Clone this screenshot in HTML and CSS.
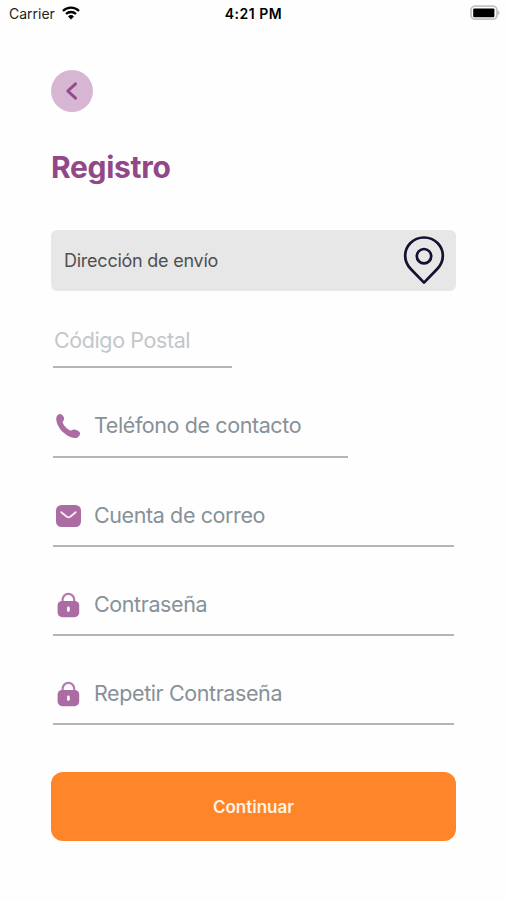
FILE: index.html
```html
<!DOCTYPE html>
<html lang="es">
<head>
  <meta charset="UTF-8" />
  <meta name="viewport" content="width=device-width, initial-scale=1.0"/>
  <title>Registro</title>
  <link rel="stylesheet" href="styles.css">
</head>
<body>
  <header class="status-bar">
    <div class="carrier">
      <span>Carrier</span>
      <svg class="wifi" viewBox="0 0 18 14" width="18" height="14">
        <path d="M1 5A11.3 11.3 0 0 1 17 5M4 8A7.2 7.2 0 0 1 14 8" fill="none" stroke="#000" stroke-width="2.3"/>
        <path d="M9 13.6L6 10.5A4.3 4.3 0 0 1 12 10.5Z" fill="#000"/>
      </svg>
    </div>
    <span class="time">4:21 PM</span>
    <svg class="battery" viewBox="0 0 32 16" width="32" height="16">
      <rect x="2" y="1.2" width="26" height="13" rx="4" fill="#fff" stroke="#c4c4c4" stroke-width="1.8"/>
      <rect x="4.2" y="3.4" width="21.2" height="8.8" rx="1" fill="#000"/>
      <path d="M29.2 5.4Q32 7.7 29.2 10Z" fill="#b5b5b5"/>
    </svg>
  </header>

  <main class="registro">
    <button type="button" class="volver" aria-label="Volver">
      <svg viewBox="0 0 42 42" width="42" height="42">
        <path d="M24.5 13.8L16.8 21L24.5 28.2" fill="none" stroke="#944b8b" stroke-width="3" stroke-linecap="round" stroke-linejoin="round"/>
      </svg>
    </button>

    <h1>Registro</h1>

    <form>
      <button type="button" class="direccion">
        <span>Dirección de envío</span>
        <svg viewBox="0 0 42 50" width="42" height="50">
          <path d="M21 47.6L34.2 34C41.6 26.6 41.6 15.4 34.8 8.2C27.2 .6 14.8 .6 7.2 8.2C.4 15.4 .4 26.6 7.8 34Z" fill="none" stroke="#160f30" stroke-width="2.7" stroke-linejoin="round"/>
          <circle cx="21" cy="21.2" r="7.2" fill="none" stroke="#160f30" stroke-width="2.7"/>
        </svg>
      </button>

      <label class="campo postal">
        <span>Código Postal</span>
      </label>

      <label class="campo telefono">
        <svg viewBox="0 0 28 28" width="28" height="28">
          <path d="M3.8 4.2C5.2 2.2 7.4 1.4 9 2.8C10.6 4.3 11.4 6 11 7.6C10.7 8.9 9.1 9.6 9.8 11C11.2 14 13.4 16.5 16.6 18.3C18.2 19.2 19 17.4 21 17.4C23.2 17.4 25.9 18.8 26.8 20.4C27.8 22.6 25.6 25.2 23.3 25.9C19.6 26.8 14.6 24.4 10.4 20.6C5.9 16.3 1.6 8.7 3.8 4.2Z" fill="#aa6ca3"/>
        </svg>
        <span>Teléfono de contacto</span>
      </label>

      <label class="campo correo">
        <svg viewBox="0 0 28 28" width="28" height="28">
          <rect x="3" y="3" width="25" height="22" rx="5.5" fill="#aa6ca3"/>
          <path d="M8.3 10.2L13.8 14.7Q15.5 15.9 17.2 14.7L22.7 10.2" fill="none" stroke="#fbe9f8" stroke-width="1.9" stroke-linecap="round"/>
        </svg>
        <span>Cuenta de correo</span>
      </label>

      <label class="campo contrasena">
        <svg viewBox="0 0 28 28" width="28" height="28">
          <path d="M9.6 11V8.7A5.8 5.8 0 0 1 21.2 8.7V11" fill="none" stroke="#b67bb0" stroke-width="2.2"/>
          <rect x="4.6" y="10" width="21.6" height="16.2" rx="4.6" fill="#aa6ca3"/>
          <rect x="14.1" y="15.6" width="2.6" height="5.2" rx="1.3" fill="#fff"/>
        </svg>
        <span>Contraseña</span>
      </label>

      <label class="campo repetir">
        <svg viewBox="0 0 28 28" width="28" height="28">
          <path d="M9.6 11V8.7A5.8 5.8 0 0 1 21.2 8.7V11" fill="none" stroke="#b67bb0" stroke-width="2.2"/>
          <rect x="4.6" y="10" width="21.6" height="16.2" rx="4.6" fill="#aa6ca3"/>
          <rect x="14.1" y="15.6" width="2.6" height="5.2" rx="1.3" fill="#fff"/>
        </svg>
        <span>Repetir Contraseña</span>
      </label>

      <button type="submit" class="continuar">Continuar</button>
    </form>
  </main>
</body>
</html>
```

FILE: styles.css
```css
* {
  box-sizing: border-box;
}

body {
  margin: 0;
  height: 900px;
  font-family: Inter, "Liberation Sans", sans-serif;
  background: #fefefe;
  overflow: hidden;
}

button {
  padding: 0;
  border: none;
  font-family: inherit;
  cursor: pointer;
}

svg {
  display: block;
  flex-shrink: 0;
}

.status-bar {
  height: 26px;
  padding: 0 6px 0 9px;
  display: grid;
  grid-template-columns: 1fr auto 1fr;
  align-items: center;
  font-size: 14px;
  color: #222;
}

.carrier {
  display: flex;
  align-items: center;
  gap: 7px;
}

.time {
  padding-right: 3px;
  font-weight: 600;
  letter-spacing: 0.5px;
  color: #000;
}

.battery {
  justify-self: end;
}

.registro {
  padding: 44px 51px 0;
}

.volver {
  display: block;
  width: 42px;
  height: 42px;
  border-radius: 50%;
  background: #d6b6d2;
}

h1 {
  margin: 35px 0 0;
  font-size: 30px;
  line-height: 40px;
  font-weight: 700;
  letter-spacing: -0.3px;
  color: #914788;
}

form {
  margin-top: 43px;
}

.direccion {
  width: 100%;
  height: 61px;
  padding: 0 11px 2px 13px;
  display: flex;
  align-items: center;
  justify-content: space-between;
  border-radius: 6px;
  background: #e7e7e7;
  color: #505050;
  font-size: 18px;
  letter-spacing: -0.24px;
}

.direccion span {
  padding-top: 2px;
}

.campo {
  display: flex;
  align-items: center;
  gap: 13px;
  height: 89px;
  margin: 0 2px;
  padding-top: 26px;
  border-bottom: 2px solid #b3b6b9;
  font-size: 21.5px;
  letter-spacing: -0.4px;
  color: #879198;
}

.campo svg {
  margin-top: 2px;
}

.postal {
  width: 179px;
  height: 77px;
  padding-top: 22px;
  padding-left: 1px;
  color: #c3c7cb;
}

.telefono {
  width: 295px;
  height: 90px;
}

.continuar {
  display: block;
  width: 100%;
  height: 69px;
  margin-top: 47px;
  border-radius: 12px;
  background: #ff852b;
  color: #fff3e4;
  font-size: 17px;
  font-weight: 600;
}
```
